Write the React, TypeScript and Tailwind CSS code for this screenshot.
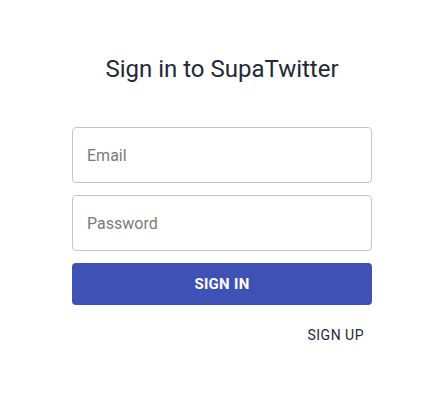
export default function App() {
  return (
    <div className="min-h-[413px] w-full bg-white font-['Roboto',sans-serif]">
      <div className="ml-[72px] flex w-[300px] flex-col pt-[55px]">
        <h1 className="text-center text-[24px] font-normal leading-[28px] text-[#1f2937]">
          Sign in to SupaTwitter
        </h1>

        <form className="mt-[44px] flex flex-col" onSubmit={(e) => e.preventDefault()}>
          <input
            type="email"
            placeholder="Email"
            className="h-[56px] w-full rounded-[4px] border border-[#c4c4c4] px-[14px] text-[16px] text-[#1f2937] placeholder:text-[#7a7a7a] outline-none"
          />
          <input
            type="password"
            placeholder="Password"
            className="mt-[12px] h-[56px] w-full rounded-[4px] border border-[#c4c4c4] px-[14px] text-[16px] text-[#1f2937] placeholder:text-[#7a7a7a] outline-none"
          />
          <button
            type="submit"
            className="mt-[12px] h-[42px] w-full rounded-[4px] bg-[#3f51b5] text-[15px] font-bold uppercase tracking-[0.3px] text-white"
          >
            Sign In
          </button>
        </form>

        <div className="mt-[12px] flex justify-end">
          <button className="h-[36px] px-[8px] text-[14px] font-normal uppercase tracking-[0.5px] text-[#1f2937]">
            Sign Up
          </button>
        </div>
      </div>
    </div>
  );
}
